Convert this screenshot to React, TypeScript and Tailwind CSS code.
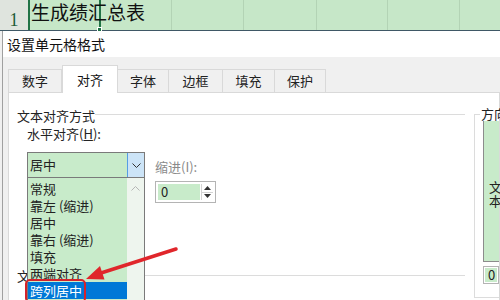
import React from 'react';

const cjk = "font-['Microsoft_YaHei','Noto_Sans_CJK_SC','Noto_Sans',sans-serif]";

const tabs = [
  { label: '数字', w: 'w-[54px]' },
  { label: '对齐', w: 'w-[56px]', active: true },
  { label: '字体', w: 'w-[52px]' },
  { label: '边框', w: 'w-[55px]' },
  { label: '填充', w: 'w-[53px]' },
  { label: '保护', w: 'w-[52px]' },
];

const options = ['常规', '靠左 (缩进)', '居中', '靠右 (缩进)', '填充', '两端对齐', '跨列居中'];

function Spinner({ value }: { value: string }) {
  return (
    <div className="flex w-[61px] h-[22px] border border-[#b4b4b4] bg-white p-[2px]">
      <div className="flex-1 bg-[#c8ebca] flex items-center pl-[3px] text-[13px] text-[#222]">{value}</div>
      <div className="w-[12px] flex flex-col ml-[1px] border-l border-[#d4d4d4]">
        <div className="flex-1 flex items-center justify-center border-b border-[#d4d4d4]">
          <svg width="7" height="4" viewBox="0 0 7 4"><path d="M3.5 0L7 4H0z" fill="#333" /></svg>
        </div>
        <div className="flex-1 flex items-center justify-center">
          <svg width="7" height="4" viewBox="0 0 7 4"><path d="M0 0h7L3.5 4z" fill="#333" /></svg>
        </div>
      </div>
    </div>
  );
}

export default function App() {
  return (
    <div className={`relative w-[500px] h-[300px] overflow-hidden bg-[#f0f0f0] flex flex-col ${cjk}`}>
      {/* spreadsheet row behind the dialog */}
      <div className="flex h-[31px] shrink-0 bg-[#c6e7c8] border-b border-[#3f5866]">
        <div className="w-[28px] bg-[#dfe4de] flex items-end justify-center pb-[1px] font-['Liberation_Serif',serif] text-[18px] leading-none text-[#1e5c36]">
          1
        </div>
        <div className="relative w-[73px] border-x-2 border-[#217346] whitespace-nowrap text-[19px] leading-[24px] text-[#111] pl-[1px]">
          生成绩汇总表
          <div className="absolute -right-[3px] -bottom-[2px] w-[5px] h-[5px] bg-[#217346] border border-white" />
        </div>
        <div className="w-[71px] border-r border-[#b3d3b5]" />
        <div className="w-[72px] border-r border-[#b3d3b5]" />
        <div className="w-[73px] border-r border-[#b3d3b5]" />
        <div className="w-[71px] border-r border-[#b3d3b5]" />
        <div className="w-[72px] border-r border-[#b3d3b5]" />
        <div className="flex-1" />
      </div>

      {/* dialog */}
      <div className="flex-1 flex flex-col ml-[2px] border-l border-[#a0a0a0] min-h-0">
        <div className="h-[26px] shrink-0 bg-white flex items-center pl-[4px] text-[14px] text-[#111]">
          设置单元格格式
        </div>
        <div className="flex-1 flex flex-col pt-[9px] pl-[5px] min-h-0">
          <div className="flex items-end h-[27px] relative z-10 -mb-px">
            {tabs.map((t) =>
              t.active ? (
                <div
                  key={t.label}
                  className={`${t.w} h-[28px] bg-white border border-b-0 border-[#d9d9d9] flex items-center justify-center text-[13px] text-[#111]`}
                >
                  {t.label}
                </div>
              ) : (
                <div
                  key={t.label}
                  className={`${t.w} h-[24px] bg-[#f0f0f0] border border-[#d9d9d9] -ml-px first:ml-0 flex items-center justify-center text-[13px] text-[#222]`}
                >
                  {t.label}
                </div>
              )
            )}
          </div>

          <div className="flex-1 bg-white border border-[#d9d9d9] flex">
            {/* left column */}
            <div className="w-[465px] shrink-0 pl-[8px] pr-[9px] pt-[14px] flex flex-col text-[13px] text-[#222]">
              <div className="flex items-center h-[18px]">
                <span>文本对齐方式</span>
                <div className="flex-1 h-px bg-[#dcdcdc] -mt-[3px]" />
              </div>
              <div className="pl-[10px] h-[18px] leading-[18px]">
                水平对齐(<span className="underline">H</span>):
              </div>
              <div className="flex items-start pl-[10px] mt-[9px]">
                <div className="relative z-20 w-[118px]">
                  <div className="flex h-[26px] border border-[#7a7a7a] bg-[#c8ebca]">
                    <div className="flex-1 flex items-center pl-[2px]">居中</div>
                    <div className="w-[17px] bg-[#cce4f7] border-l border-[#569de5] flex items-center justify-center">
                      <svg width="9" height="5" viewBox="0 0 9 5"><path d="M0.5 0.5L4.5 4.5L8.5 0.5" fill="none" stroke="#333" strokeWidth="1" /></svg>
                    </div>
                  </div>
                  <div className="absolute left-0 top-[26px] w-[118px] h-[130px] flex border-x border-[#7a7a7a] bg-[#c8ebca]">
                    <div className="flex-1 pt-[2px]">
                      {options.map((o, i) => (
                        <div
                          key={o}
                          className={`h-[17px] leading-[17px] pl-[2px] ${
                            i === options.length - 1 ? 'bg-[#0078d7] text-white' : ''
                          }`}
                        >
                          {o}
                        </div>
                      ))}
                    </div>
                    <div className="w-[17px] bg-[#eef5ee] flex justify-center pt-[8px]">
                      <svg width="9" height="5" viewBox="0 0 9 5"><path d="M0.5 4.5L4.5 0.5L8.5 4.5" fill="none" stroke="#b5b5b5" strokeWidth="1" /></svg>
                    </div>
                  </div>
                </div>
                <div className="ml-[10px] mt-[6px] flex flex-col">
                  <div className="h-[18px] leading-[18px] text-[#8a8a8a]">缩进(I):</div>
                  <div className="mt-[5px]">
                    <Spinner value="0" />
                  </div>
                </div>
              </div>
              <div className="flex items-center h-[18px] mt-[64px]">
                <span>文本控制</span>
                <div className="flex-1 h-px bg-[#dcdcdc] -mt-[1px]" />
              </div>
            </div>

            {/* orientation group */}
            <fieldset className="flex-1 min-w-0 mt-[14px] mb-[2px] border-l border-t border-b border-[#dcdcdc] pl-[8px] pb-[13px] flex flex-col text-[13px] text-[#222]">
              <legend className="-ml-[3px] px-[1px] leading-[14px] whitespace-nowrap">方向</legend>
              <div className="h-[141px] bg-[#c8ebca] border-l border-b border-[#8c8c8c] flex flex-col justify-center pl-[5px] leading-[14px] pt-[6px]">
                <span>文</span>
                <span>本</span>
              </div>
              <div className="mt-[4px] h-[18px] border border-[#b4b4b4] bg-white p-[1px]">
                <div className="h-full bg-[#c8ebca] pl-[3px] leading-[14px]">0</div>
              </div>
            </fieldset>
          </div>
        </div>
      </div>

      {/* annotation: highlight + arrow */}
      <div className="absolute left-[25px] top-[279px] w-[61px] h-[24px] border-2 border-[#d4232b] rounded-[5px] z-30" />
      <svg className="absolute left-0 top-0 z-30 pointer-events-none" width="500" height="300">
        <line x1="176" y1="249" x2="101" y2="273" stroke="#e0262b" strokeWidth="3.5" strokeLinecap="round" />
        <polygon points="86,279 104.5,279.5 100,266" fill="#e0262b" />
      </svg>
    </div>
  );
}
